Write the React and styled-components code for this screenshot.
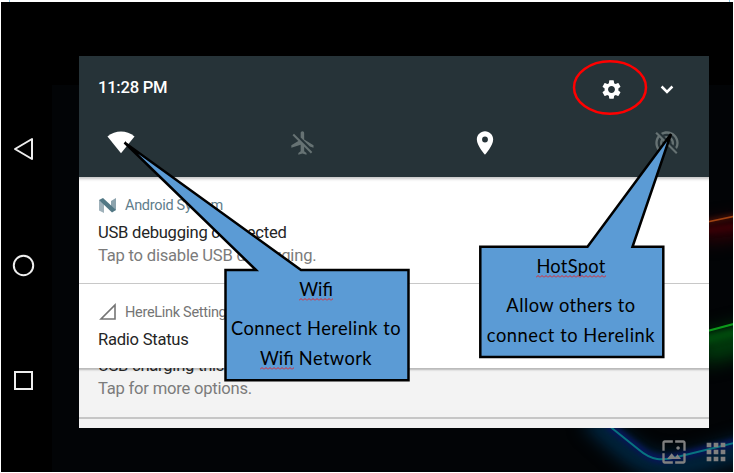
import React from "react";
import styled, { createGlobalStyle } from "styled-components";
import {
  MdSettings,
  MdLocationOn,
  MdPortableWifiOff,
  MdWallpaper,
  MdApps,
} from "react-icons/md";

const GlobalStyle = createGlobalStyle`
  *, *::before, *::after { box-sizing: border-box; }
  body { margin: 0; background: #fff; overflow: hidden; }
`;

const Page = styled.main`
  position: relative;
  width: 734px;
  height: 473px;
  padding: 2px 1px 1px;
  background: #fff;
  font-family: Roboto, sans-serif;
`;

const GuideTick = styled.span`
  position: absolute;
  top: 0;
  left: ${(p) => p.$x}px;
  width: 1px;
  height: 2px;
  background: #8fcbe6;
`;

const Screen = styled.div`
  position: relative;
  display: flex;
  height: 470px;
  overflow: hidden;
  background: #000;
`;

const Wallpaper = styled.svg`
  position: absolute;
  inset: 0;
`;

const NavRail = styled.nav`
  position: relative;
  display: flex;
  flex-direction: column;
  align-items: center;
  justify-content: space-between;
  width: 45px;
  height: 257px;
  margin: 134px 33px 0 0;
`;

const Shade = styled.section`
  position: relative;
  display: flex;
  flex-direction: column;
  width: 630px;
  height: 372px;
  margin-top: 54px;
  overflow: hidden;
  background: #f3f3f3;
`;

const QuickSettings = styled.header`
  flex: none;
  height: 121px;
  padding: 17px 28px 0 19px;
  background: #263338;
  color: #fff;
`;

const StatusRow = styled.div`
  display: flex;
  align-items: center;
  height: 32px;
`;

const Clock = styled.time`
  flex: 1;
  padding-bottom: 3px;
  font-size: 16.6px;
  font-weight: 500;
  letter-spacing: -0.25px;
  line-height: 20px;
`;

const HeaderIcon = styled.span`
  display: flex;
  justify-content: center;
  width: 28px;
  margin-left: ${(p) => p.$gap || 0}px;
  color: #fff;
`;

const TileRow = styled.div`
  display: flex;
  justify-content: space-between;
  align-items: center;
  height: 30px;
  margin: 23px 0 0 9px;
`;

const Tile = styled.span`
  display: flex;
  justify-content: center;
  width: 28px;
  color: ${(p) => (p.$off ? "#667273" : "#fff")};
`;

const Notice = styled.article`
  flex: none;
  height: ${(p) => p.$h}px;
  padding: ${(p) => p.$top}px 19px 0;
  background: #fff;
  border-bottom: 1px solid #c8c8c8;
`;

const TopNotice = styled(Notice)`
  box-shadow: inset 0 4px 3px -2px #c5c5c5;
`;

const LastNotice = styled(Notice)`
  border-bottom: 0;
`;

const TuckedNotice = styled(Notice)`
  background: #f3f3f3;
  border-bottom: 2px solid #c6c6c6;
  box-shadow: inset 0 3px 2px -1px #b8b8b8;
  overflow: hidden;
`;

const Source = styled.div`
  display: flex;
  align-items: center;
  gap: 8px;
  height: 20px;
  font-size: 14.5px;
  letter-spacing: -0.3px;
  color: ${(p) => p.$color};
  white-space: nowrap;
`;

const Title = styled.h2`
  margin: ${(p) => p.$gap}px 0 0;
  font-size: 16.6px;
  font-weight: 400;
  letter-spacing: -0.26px;
  line-height: 23px;
  color: #252525;
  white-space: nowrap;
`;

const Detail = styled.p`
  margin: 0;
  font-size: 16.6px;
  letter-spacing: -0.22px;
  line-height: 23px;
  color: #7b7b7b;
  white-space: nowrap;
`;

const Dock = styled.div`
  position: absolute;
  right: 3px;
  bottom: 6px;
  display: flex;
  gap: 14px;
  color: #808080;
`;

const Annotations = styled.svg`
  position: absolute;
  inset: 0;
`;

const CalloutText = styled.div`
  position: absolute;
  left: ${(p) => p.$x}px;
  top: ${(p) => p.$y}px;
  display: flex;
  flex-direction: column;
  align-items: center;
  width: 184px;
  font-family: Lato, "Open Sans", sans-serif;
  font-size: 18.3px;
  line-height: 30px;
  color: #000;
  white-space: nowrap;
`;

const Line = styled.div`
  margin-bottom: ${(p) => p.$after || 0}px;
  letter-spacing: ${(p) => p.$track || 0}px;
`;

const wave =
  "url(\"data:image/svg+xml,%3Csvg xmlns='http://www.w3.org/2000/svg' width='4' height='3'%3E%3Cpath d='M0 2.500L2 .5L4 2.500' fill='none' stroke='%23f01818' stroke-width='.9'/%3E%3C/svg%3E\")";

const Misspelt = styled.span`
  padding-bottom: 1px;
  letter-spacing: ${(p) => p.$track || 0}px;
  background: ${wave} left bottom / 4px 3px repeat-x;
`;

function Glow({ id, blur }) {
  return (
    <filter
      id={id}
      filterUnits="userSpaceOnUse"
      colorInterpolationFilters="sRGB"
      x="0"
      y="0"
      width="800"
      height="550"
    >
      <feGaussianBlur stdDeviation={blur} />
    </filter>
  );
}

function WallpaperArt() {
  return (
    <Wallpaper width="732" height="470" viewBox="1 2 732 470">
      <defs>
        <Glow id="wide" blur="9" />
        <Glow id="near" blur="2.5" />
        <Glow id="fine" blur="0.5" />
      </defs>
      <rect x="52" y="85" width="681" height="387" fill="#020406" />
      <g fill="none">
        <path d="M700 233L750 227" stroke="#380006" strokeWidth="16" filter="url(#wide)" />
        <path d="M700 231L750 225" stroke="#3c0006" strokeWidth="6" filter="url(#near)" />
        <path d="M700 223L750 213" stroke="#5a1808" strokeWidth="3" filter="url(#near)" />
        <path d="M700 223.500L750 213" stroke="#a04212" strokeWidth="1.600" filter="url(#fine)" />
        <path d="M700 350L750 338" stroke="#003a0c" strokeWidth="30" filter="url(#wide)" />
        <path d="M700 341L750 329" stroke="#004a0d" strokeWidth="9" filter="url(#near)" />
        <path d="M700 333L750 319.500" stroke="#0c9a1b" strokeWidth="2.200" filter="url(#fine)" />
        <path d="M590 418C625 448 638 466 668 466S710 457 750 447" stroke="#002a48" strokeWidth="20" filter="url(#wide)" />
        <path d="M608 425L638 448C652 460 662 461 677 457L750 439" stroke="#08165a" strokeWidth="8" filter="url(#near)" />
        <path d="M608 425L638 449C652 461 662 461 677 457L750 439" stroke="#08737f" strokeWidth="2" filter="url(#fine)" />
      </g>
    </Wallpaper>
  );
}

function AirplaneOffIcon() {
  return (
    <svg width="28" height="28" viewBox="0 0 24 24" fill="currentColor">
      <path d="M13 9V3.500C13 2.670 12.330 2 11.500 2S10 2.670 10 3.500V7.180L17.830 15.010L21 16V14L13 9ZM3 5.270L7.990 10.260L2 14V16L10 13.500V19L8 20.500V22L11.500 21L15 22V20.500L13 19V15.270L18.730 21L20 19.730L4.270 4L3 5.270Z" />
    </svg>
  );
}

export default function App() {
  return (
    <>
      <GlobalStyle />
      <Page>
        <GuideTick $x={9} />
        <GuideTick $x={729} />
        <Screen>
          <WallpaperArt />
          <NavRail>
            <svg width="24" height="26" viewBox="0 0 24 26" fill="none" stroke="#eee" strokeWidth="2">
              <path d="M3 13L20 3V23Z" strokeLinejoin="round" />
            </svg>
            <svg width="24" height="24" viewBox="0 0 24 24" fill="none" stroke="#eee" strokeWidth="2">
              <circle cx="11.500" cy="11.500" r="9.700" />
            </svg>
            <svg width="24" height="24" viewBox="0 0 24 24" fill="none" stroke="#eee" strokeWidth="2">
              <rect x="3" y="3" width="17" height="17" />
            </svg>
          </NavRail>
          <Shade>
            <QuickSettings>
              <StatusRow>
                <Clock>11:28 PM</Clock>
                <HeaderIcon><MdSettings size={23} /></HeaderIcon>
                <HeaderIcon $gap={28}>
                  <svg width="24" height="24" viewBox="0 0 24 24" fill="none" stroke="#fff" strokeWidth="2.500">
                    <path d="M6.600 9.500L12 15L17.400 9.500" />
                  </svg>
                </HeaderIcon>
              </StatusRow>
              <TileRow>
                <Tile>
                  <svg width="30" height="26" viewBox="0 0 30 26" fill="currentColor">
                    <path d="M0.500 6C9 -1 21 -1 29.500 6L15 24Z" />
                  </svg>
                </Tile>
                <Tile $off><AirplaneOffIcon /></Tile>
                <Tile><MdLocationOn size={28} /></Tile>
                <Tile $off><MdPortableWifiOff size={28} /></Tile>
              </TileRow>
            </QuickSettings>
            <TopNotice $h={107} $top={18}>
              <Source $color="#607d8b">
                <svg width="19" height="15" viewBox="0 0 19 15">
                  <path d="M1 2L6 4V15L1 12.500Z" fill="#9fb1ba" />
                  <path d="M13 3L18 0V12L13 13Z" fill="#8ca3ad" />
                  <path d="M1 2L5 0L18 12L14 14.500Z" fill="#527885" />
                </svg>
                Android System
              </Source>
              <Title $gap={6}>USB debugging connected</Title>
              <Detail>Tap to disable USB debugging.</Detail>
            </TopNotice>
            <LastNotice $h={84} $top={18}>
              <Source $color="#757575">
                <svg width="19" height="18" viewBox="0 0 19 18" fill="none" stroke="#757575" strokeWidth="1.600">
                  <path d="M3 16H17V2Z" />
                </svg>
                HereLink Settings
              </Source>
              <Title $gap={6}>Radio Status</Title>
            </LastNotice>
            <TuckedNotice $h={51} $top={0}>
              <Title $gap={-14}>USB charging this device</Title>
              <Detail>Tap for more options.</Detail>
            </TuckedNotice>
          </Shade>
          <Dock>
            <MdWallpaper size={28} />
            <MdApps size={28} />
          </Dock>
        </Screen>
        <Annotations width="734" height="473" viewBox="0 0 734 473">
          <ellipse cx="610" cy="87.500" rx="36" ry="26.300" fill="none" stroke="#f00" strokeWidth="2.500" />
          <g fill="#5b9bd5" stroke="#000" strokeWidth="2.500">
            <path d="M225.500 270H256L124.500 142.500L301 270H408.500V380.300H225.500Z" />
            <path d="M480.300 246.800H587.500L671 134L632.500 246.800H663.300V357H480.300Z" />
          </g>
        </Annotations>
        <CalloutText $x={224} $y={274}>
          <Line $after={9}><Misspelt>Wifi</Misspelt></Line>
          <Line $track={0.45}>Connect Herelink to</Line>
          <Line $track={0.4}><Misspelt>Wifi</Misspelt> Network</Line>
        </CalloutText>
        <CalloutText $x={479} $y={251}>
          <Line $after={9}><Misspelt $track={0.3}>HotSpot</Misspelt></Line>
          <Line $track={0.45}>Allow others to</Line>
          <Line $track={0.55}>connect to Herelink</Line>
        </CalloutText>
      </Page>
    </>
  );
}
